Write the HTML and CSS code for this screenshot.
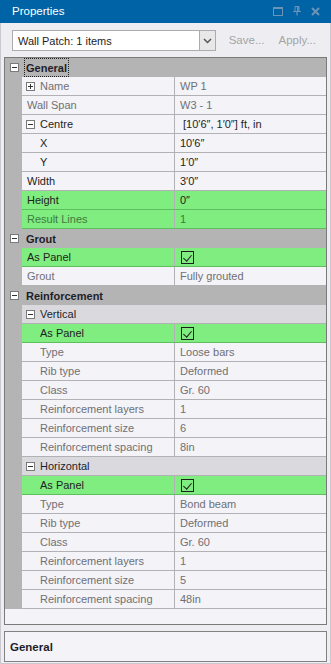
FILE: index.html
```html
<!DOCTYPE html>
<html>
<head>
<meta charset="utf-8">
<link rel="stylesheet" href="styles.css">
</head>
<body>
<div class="window">
  <div class="titlebar">
    <span class="title">Properties</span>
    <div class="title-icons">
      <svg width="10" height="9" viewBox="0 0 10 9"><rect x="0.5" y="0.5" width="9" height="8" fill="none" stroke="#6c93b8" stroke-width="1"/><rect x="0" y="0" width="10" height="2" fill="#6c93b8"/></svg>
      <svg width="8" height="10" viewBox="0 0 8 10"><path d="M2 0.5h4v5h-4z" fill="none" stroke="#6c93b8"/><rect x="4" y="1" width="1.5" height="4.5" fill="#6c93b8"/><path d="M0 5.5h8M4 5.5v4" stroke="#6c93b8" stroke-width="1.2"/></svg>
      <svg width="9" height="9" viewBox="0 0 9 9"><path d="M1 1l7 7M8 1l-7 7" stroke="#6c93b8" stroke-width="2"/></svg>
    </div>
  </div>
  <div class="toolbar">
    <div class="combo">
      <span class="combo-text">Wall Patch: 1 items</span>
      <span class="combo-btn"><svg width="9" height="6" viewBox="0 0 9 6"><path d="M1 1l3.5 3.5L8 1" fill="none" stroke="#555" stroke-width="1.5"/></svg></span>
    </div>
    <span class="tb-link">Save...</span>
    <span class="tb-link">Apply...</span>
  </div>
  <div class="grid">
    <div class="cat"><span class="pm cat-pm"><i class="minus"></i></span><span class="cat-text focus">General</span></div>
    <div class="section">
      <div class="gutter"></div>
      <div class="rows">
        <div class="row"><div class="lab ro"><span class="pm"><i class="minus"></i><i class="vbar"></i></span>Name</div><div class="val ro">WP 1</div></div>
        <div class="row"><div class="lab ro">Wall Span</div><div class="val ro">W3 - 1</div></div>
        <div class="row"><div class="lab"><span class="pm"><i class="minus"></i></span>Centre</div><div class="val">&nbsp;[10′6″, 1′0″] ft, in</div></div>
        <div class="row"><div class="lab ind">X</div><div class="val">10′6″</div></div>
        <div class="row"><div class="lab ind">Y</div><div class="val">1′0″</div></div>
        <div class="row"><div class="lab">Width</div><div class="val">3′0″</div></div>
        <div class="row green"><div class="lab">Height</div><div class="val">0″</div></div>
        <div class="row green"><div class="lab gro">Result Lines</div><div class="val gro">1</div></div>
      </div>
    </div>
    <div class="cat"><span class="pm cat-pm"><i class="minus"></i></span><span class="cat-text">Grout</span></div>
    <div class="section">
      <div class="gutter"></div>
      <div class="rows">
        <div class="row green"><div class="lab">As Panel</div><div class="val"><span class="chk"></span></div></div>
        <div class="row"><div class="lab ro">Grout</div><div class="val ro">Fully grouted</div></div>
      </div>
    </div>
    <div class="cat"><span class="pm cat-pm"><i class="minus"></i></span><span class="cat-text">Reinforcement</span></div>
    <div class="section">
      <div class="gutter"></div>
      <div class="rows">
        <div class="sub"><span class="pm"><i class="minus"></i></span>Vertical</div>
        <div class="row green"><div class="lab ind">As Panel</div><div class="val"><span class="chk"></span></div></div>
        <div class="row"><div class="lab ind ro">Type</div><div class="val ro">Loose bars</div></div>
        <div class="row"><div class="lab ind ro">Rib type</div><div class="val ro">Deformed</div></div>
        <div class="row"><div class="lab ind ro">Class</div><div class="val ro">Gr. 60</div></div>
        <div class="row"><div class="lab ind ro">Reinforcement layers</div><div class="val ro">1</div></div>
        <div class="row"><div class="lab ind ro">Reinforcement size</div><div class="val ro">6</div></div>
        <div class="row"><div class="lab ind ro">Reinforcement spacing</div><div class="val ro">8in</div></div>
        <div class="sub"><span class="pm"><i class="minus"></i></span>Horizontal</div>
        <div class="row green"><div class="lab ind">As Panel</div><div class="val"><span class="chk"></span></div></div>
        <div class="row"><div class="lab ind ro">Type</div><div class="val ro">Bond beam</div></div>
        <div class="row"><div class="lab ind ro">Rib type</div><div class="val ro">Deformed</div></div>
        <div class="row"><div class="lab ind ro">Class</div><div class="val ro">Gr. 60</div></div>
        <div class="row"><div class="lab ind ro">Reinforcement layers</div><div class="val ro">1</div></div>
        <div class="row"><div class="lab ind ro">Reinforcement size</div><div class="val ro">5</div></div>
        <div class="row"><div class="lab ind ro">Reinforcement spacing</div><div class="val ro">48in</div></div>
      </div>
    </div>
  </div>
  <div class="desc"><span class="desc-title">General</span></div>
</div>
</body>
</html>
```
FILE: styles.css
```css
* { box-sizing: border-box; }
html, body { margin: 0; padding: 0; }
body {
  width: 331px;
  height: 664px;
  overflow: hidden;
  font-family: "Liberation Sans", Arial, sans-serif;
  font-size: 11px;
  background: #eeeef2;
}
.window {
  width: 331px;
  height: 664px;
  border: 1px solid #c9c9cf;
  border-top: none;
  background: #eeeef2;
  display: flex;
  flex-direction: column;
}
.titlebar {
  height: 23px;
  margin: 0 -1px;
  background: #0063a5;
  color: #fff;
  display: flex;
  align-items: center;
  justify-content: space-between;
  padding: 0 11px 1px 12px;
}
.title { font-size: 11.5px; }
.title-icons { display: flex; align-items: center; gap: 10px; }
.title-icons svg { display: block; }
.toolbar {
  height: 34px;
  display: flex;
  align-items: center;
  padding: 0 0 0 11px;
}
.combo {
  width: 208px;
  height: 21px;
  border: 1px solid #acacac;
  background: #fff;
  display: flex;
  align-items: center;
  justify-content: space-between;
  margin-right: 13px;
  margin-top: 1px;
}
.combo-text { padding-left: 5px; color: #1e1e1e; font-size: 11px; }
.combo-btn {
  width: 16px;
  height: 19px;
  border-left: 1px solid #acacac;
  background: #e8e8e8;
  display: flex;
  align-items: center;
  justify-content: center;
}
.tb-link { color: #a4a4a4; margin-right: 14px; font-size: 11.5px; }
.grid {
  margin-left: 3px;
  width: 323px;
  height: 568px;
  border: 1px solid #7a7a7a;
  background: #f3f3f8;
}
.cat {
  height: 19px;
  background: #b4b4b4;
  display: flex;
  align-items: center;
  font-weight: bold;
  color: #1e1e2a;
}
.cat-pm { margin-left: 5px; margin-right: 5px; }
.cat-text {
  height: 19px;
  display: flex;
  align-items: center;
  padding: 0 2px;
}
.focus { outline: 1px dotted #222; outline-offset: -1px; }
.section { display: flex; }
.gutter { width: 17px; background: #b4b4b4; flex: none; }
.rows { flex: 1; }
.row {
  height: 19px;
  display: flex;
  border-bottom: 1px solid #b2b2b6;
  background: #f3f3f8;
  color: #1e1e1e;
}
.row.green { background: #80ed80; border-bottom-color: #5fbf5f; }
.lab {
  width: 153px;
  border-right: 1px solid #b2b2b6;
  padding-left: 5px;
  display: flex;
  align-items: center;
  white-space: nowrap;
}
.lab.ind { padding-left: 18px; }
.val {
  flex: 1;
  padding-left: 5px;
  display: flex;
  align-items: center;
  white-space: nowrap;
}
.ro { color: #707074; }
.gro { color: #3f7a3f; }
.sub {
  height: 19px;
  background: #dadade;
  border-bottom: 1px solid #b2b2b6;
  display: flex;
  align-items: center;
  padding-left: 4px;
  color: #1e1e2a;
}
.pm {
  width: 9px;
  height: 9px;
  border: 1px solid #7a7a7a;
  background: #fff;
  position: relative;
  margin-right: 5px;
  flex: none;
}
.row .pm { margin-left: -1px; }
.minus {
  position: absolute;
  left: 1px;
  top: 3px;
  width: 5px;
  height: 1px;
  background: #333;
}
.vbar {
  position: absolute;
  left: 3px;
  top: 1px;
  width: 1px;
  height: 5px;
  background: #333;
}
.chk {
  width: 13px;
  height: 13px;
  border: 1px solid #1e1e1e;
  margin-left: 1px;
  position: relative;
}
.chk::after {
  content: "";
  position: absolute;
  left: 3px;
  top: 1px;
  width: 4px;
  height: 7px;
  border-right: 1.5px solid #1e1e1e;
  border-bottom: 1.5px solid #1e1e1e;
  transform: rotate(40deg);
}
.desc {
  margin: 6px 0 0 3px;
  width: 323px;
  height: 31px;
  border: 1px solid #828282;
  background: #f3f3f8;
  display: flex;
  align-items: center;
  padding-left: 5px;
}
.desc-title { font-weight: bold; color: #1e1e2a; font-size: 11.5px; }
```
